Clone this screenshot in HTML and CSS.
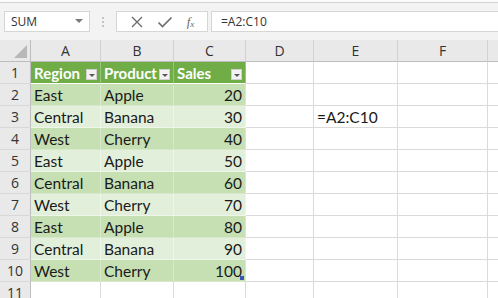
FILE: index.html
```html
<!DOCTYPE html>
<html>
<head>
<meta charset="utf-8">
<link rel="stylesheet" href="styles.css">
</head>
<body>
<div class="app">
  <div class="topline"></div>
  <div class="toolbar">
    <div class="namebox"><span>SUM</span><svg width="8" height="5" viewBox="0 0 8 5"><path d="M0 0h8L4 4z" fill="#7a7a7a"/></svg></div>
    <div class="grip"><i></i><i></i><i></i></div>
    <div class="fbtns">
      <svg class="ic" width="14" height="14" viewBox="0 0 14 14"><path d="M2 2l10 10M12 2L2 12" stroke="#6b6b6b" stroke-width="1.3"/></svg>
      <svg class="ic" width="16" height="14" viewBox="0 0 16 14"><path d="M1.5 7.5l4 4L14.5 2.5" stroke="#6b6b6b" stroke-width="1.6" fill="none"/></svg>
      <span class="fx"><i>f</i><sub>x</sub></span>
    </div>
    <div class="finput">=A2:C10</div>
  </div>
  <div class="grid">
    <div class="corner"><span class="tri"></span></div>
    <div class="ch">A</div><div class="ch">B</div><div class="ch">C</div><div class="ch">D</div><div class="ch">E</div><div class="ch">F</div><div class="ch last"></div>

    <div class="rh">1</div>
    <div class="c th"><span>Region</span><b class="dd"></b></div>
    <div class="c th"><span>Product</span><b class="dd"></b></div>
    <div class="c th"><span>Sales</span><b class="dd"></b></div>
    <div class="c"></div><div class="c"></div><div class="c"></div><div class="c last"></div>

    <div class="rh">2</div>
    <div class="c td d">East</div><div class="c td d">Apple</div><div class="c td d num">20</div>
    <div class="c"></div><div class="c"></div><div class="c"></div><div class="c last"></div>

    <div class="rh">3</div>
    <div class="c td l">Central</div><div class="c td l">Banana</div><div class="c td l num">30</div>
    <div class="c"></div><div class="c txt">=A2:C10</div><div class="c"></div><div class="c last"></div>

    <div class="rh">4</div>
    <div class="c td d">West</div><div class="c td d">Cherry</div><div class="c td d num">40</div>
    <div class="c"></div><div class="c"></div><div class="c"></div><div class="c last"></div>

    <div class="rh">5</div>
    <div class="c td l">East</div><div class="c td l">Apple</div><div class="c td l num">50</div>
    <div class="c"></div><div class="c"></div><div class="c"></div><div class="c last"></div>

    <div class="rh">6</div>
    <div class="c td d">Central</div><div class="c td d">Banana</div><div class="c td d num">60</div>
    <div class="c"></div><div class="c"></div><div class="c"></div><div class="c last"></div>

    <div class="rh">7</div>
    <div class="c td l">West</div><div class="c td l">Cherry</div><div class="c td l num">70</div>
    <div class="c"></div><div class="c"></div><div class="c"></div><div class="c last"></div>

    <div class="rh">8</div>
    <div class="c td d">East</div><div class="c td d">Apple</div><div class="c td d num">80</div>
    <div class="c"></div><div class="c"></div><div class="c"></div><div class="c last"></div>

    <div class="rh">9</div>
    <div class="c td l">Central</div><div class="c td l">Banana</div><div class="c td l num">90</div>
    <div class="c"></div><div class="c"></div><div class="c"></div><div class="c last"></div>

    <div class="rh">10</div>
    <div class="c td d">West</div><div class="c td d">Cherry</div><div class="c td d num handle">100</div>
    <div class="c"></div><div class="c"></div><div class="c"></div><div class="c last"></div>

    <div class="rh">11</div>
    <div class="c"></div><div class="c"></div><div class="c"></div>
    <div class="c"></div><div class="c"></div><div class="c"></div><div class="c last"></div>
  </div>
</div>
</body>
</html>
```

FILE: styles.css
```css
html, body {
  margin: 0;
  padding: 0;
  background: #ffffff;
  overflow: hidden;
}
.app {
  width: 498px;
  height: 298px;
  overflow: hidden;
  font-family: "Open Sans", "Noto Sans", sans-serif;
  color: #222;
}
.topline {
  height: 2px;
  background: #fbfbfb;
  border-bottom: 1px solid #d2d2d2;
}
.toolbar {
  height: 37px;
  background: #f3f3f3;
  display: flex;
  align-items: flex-start;
  padding-top: 8px;
  box-sizing: border-box;
}
.namebox {
  margin-left: 4px;
  width: 86px;
  height: 21px;
  box-sizing: border-box;
  background: #fff;
  border: 1px solid #d6d6d6;
  display: flex;
  align-items: center;
  justify-content: space-between;
  padding: 0 6px 0 6px;
  font-size: 12px;
  color: #333;
}
.grip {
  width: 26px;
  height: 21px;
  display: flex;
  flex-direction: column;
  align-items: center;
  justify-content: center;
  gap: 2px;
}
.grip i {
  width: 2px;
  height: 2px;
  background: #c4c4c4;
  display: block;
}
.fbtns {
  width: 92px;
  height: 21px;
  box-sizing: border-box;
  background: #fff;
  border: 1px solid #d6d6d6;
  display: flex;
  align-items: center;
  justify-content: space-around;
  padding: 0 6px;
}
.fx {
  font-family: "Liberation Serif", serif;
  font-size: 13px;
  color: #6b6b6b;
  line-height: 1;
}
.fx sub {
  font-size: 9px;
  font-style: italic;
  vertical-align: -1px;
}
.finput {
  margin-left: 3px;
  flex: 1;
  height: 21px;
  box-sizing: border-box;
  background: #fff;
  border: 1px solid #d6d6d6;
  border-right: none;
  font-size: 12px;
  color: #333;
  padding-left: 9px;
  line-height: 19px;
}
.grid {
  display: grid;
  grid-template-columns: 31px 70px 73px 72px 68px 84px 90px 20px;
  grid-auto-rows: 22px;
}
.corner, .ch, .rh {
  background: #e9e9e9;
  box-sizing: border-box;
  font-family: "Open Sans", "Noto Sans", sans-serif;
  font-size: 14px;
  color: #333;
  display: flex;
  align-items: center;
  justify-content: center;
}
.corner {
  border-right: 1px solid #bdbdbd;
  border-bottom: 1px solid #bdbdbd;
  align-items: flex-end;
  justify-content: flex-end;
  padding: 0 3px 3px 0;
}
.tri {
  width: 0;
  height: 0;
  border-left: 13px solid transparent;
  border-bottom: 13px solid #b8b8b8;
}
.ch {
  border-right: 1px solid #d2d2d2;
  border-bottom: 1px solid #bdbdbd;
}
.rh {
  border-right: 1px solid #bdbdbd;
  border-bottom: 1px solid #d8d8d8;
}
.c {
  box-sizing: border-box;
  border-right: 1px solid #dadada;
  border-bottom: 1px solid #dadada;
  font-family: "Lato", "Open Sans", sans-serif;
  font-size: 15.5px;
  color: #1a1a1a;
  display: flex;
  align-items: center;
  padding: 0 3px;
  white-space: nowrap;
  overflow: hidden;
}
.last {
  border-right: none;
}
.th {
  background: #70ad47;
  color: #ffffff;
  font-weight: bold;
  font-size: 15px;
  justify-content: space-between;
  border-right: 1px solid #9bc57f;
  border-bottom: 1px solid #ffffff;
  padding-right: 3px;
}
.dd {
  width: 11px;
  height: 11px;
  flex: none;
  box-sizing: border-box;
  background: #f2f2f2;
  border: 1px solid #d0d0d0;
  align-self: flex-end;
  margin-bottom: 3px;
  display: flex;
  align-items: center;
  justify-content: center;
}
.dd::after {
  content: "";
  width: 0;
  height: 0;
  border-left: 3px solid transparent;
  border-right: 3px solid transparent;
  border-top: 3px solid #595959;
  margin-top: 1px;
}
.td.d {
  background: #c6e0b4;
  border-right: 1px solid #d7e9ca;
  border-bottom: 1px solid #d7e9ca;
}
.td.l {
  background: #e2efda;
  border-right: 1px solid #eef6e9;
  border-bottom: 1px solid #eef6e9;
}
.num {
  justify-content: flex-end;
}
.txt {
  padding-left: 3px;
}
.handle {
  position: relative;
}
.handle::after {
  content: "";
  position: absolute;
  right: 1px;
  bottom: 1px;
  width: 4px;
  height: 4px;
  background: #3f56b0;
}
```
